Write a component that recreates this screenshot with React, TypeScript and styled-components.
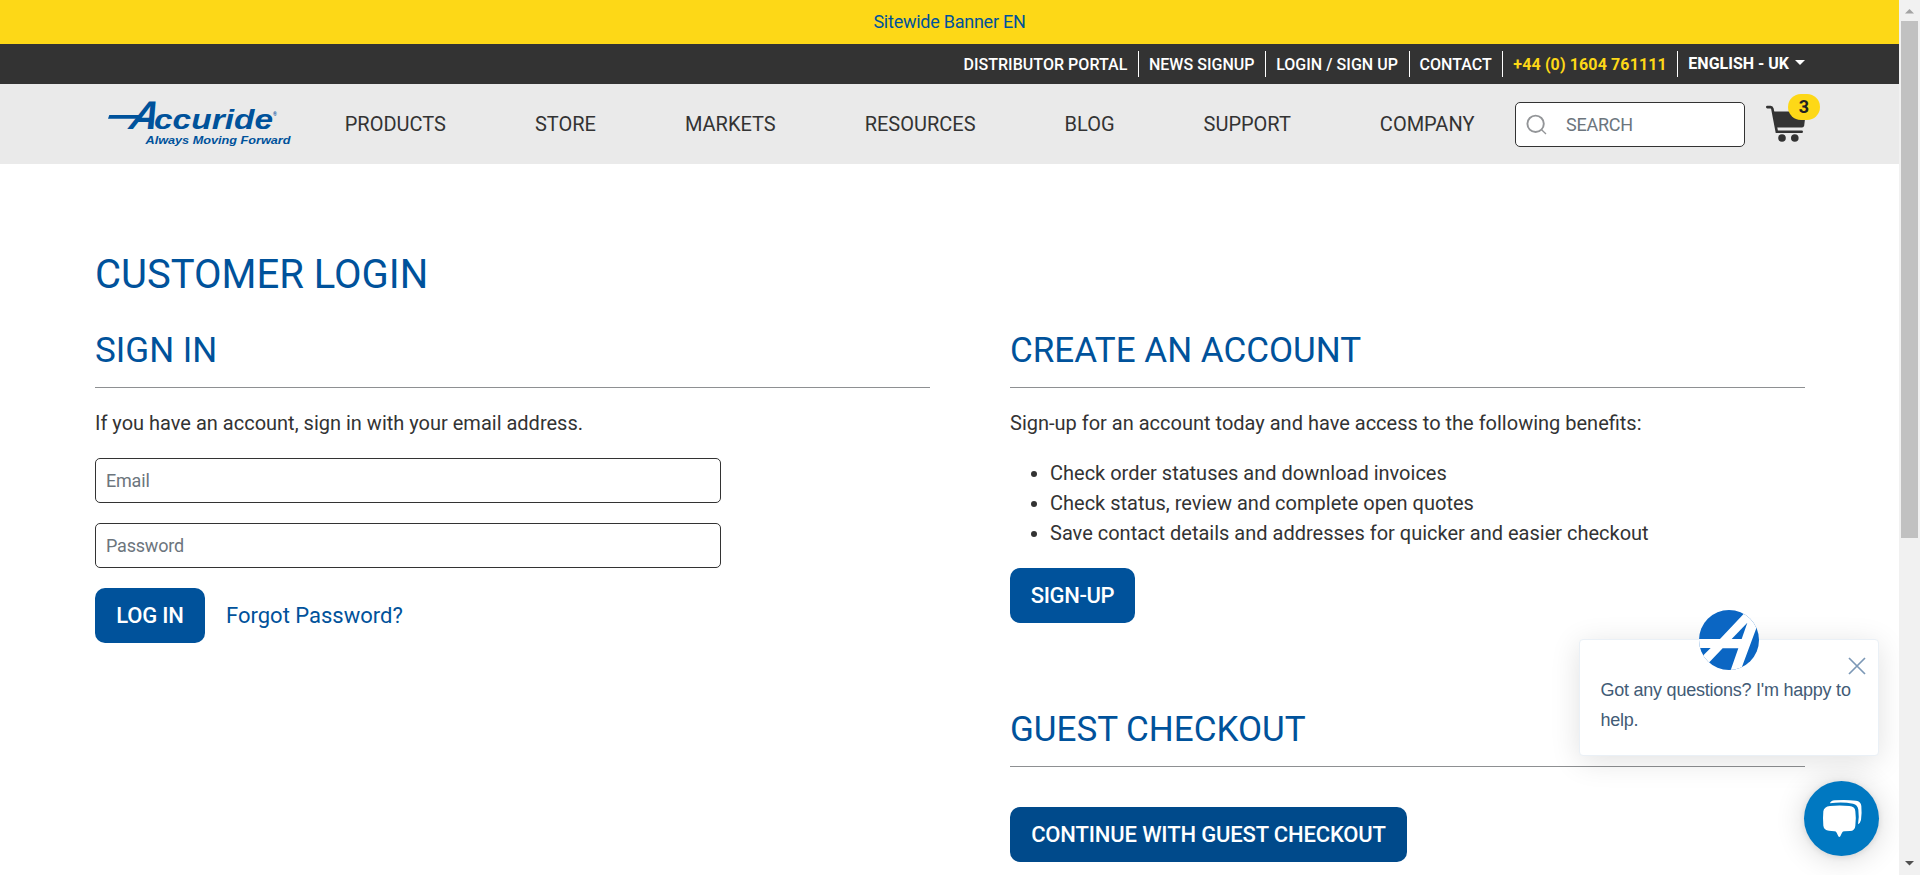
import React from "react";
import styled, { createGlobalStyle } from "styled-components";

const blue = "#00529b";
const ink = "#333333";
const yellow = "#fdd817";

const GlobalStyle = createGlobalStyle`
  *, *::before, *::after { box-sizing: border-box; }
  body {
    margin: 0;
    background: #fff;
    color: ${ink};
    font: 400 20px/30px Roboto, "Liberation Sans", sans-serif;
    overflow: hidden;
  }
  a { color: inherit; text-decoration: none; }
`;

const Screen = styled.div`
  display: flex;
  height: 875px;
  overflow: hidden;
`;

const Page = styled.div`
  position: relative;
  flex: 1;
  min-width: 0;
  height: 875px;
  overflow: hidden;
`;

const Banner = styled.div`
  height: 44px;
  background: ${yellow};
  color: ${blue};
  font-size: 18px;
  line-height: 44px;
  letter-spacing: -0.25px;
  text-align: center;
`;

const UtilityBar = styled.div`
  display: flex;
  justify-content: flex-end;
  align-items: center;
  height: 40px;
  padding-right: 94px;
  background: ${ink};
`;

const UtilityLink = styled.a<{ $accent?: boolean }>`
  height: 26px;
  padding: 0 10.5px 0 10px;
  border-right: 1px solid #fff;
  color: ${(p) => (p.$accent ? yellow : "#fff")};
  font-size: 16px;
  font-weight: ${(p) => (p.$accent ? 700 : 500)};
  letter-spacing: ${(p) => (p.$accent ? "0.12px" : "0.04px")};
  line-height: 27px;
`;

const Language = styled.a`
  display: flex;
  align-items: center;
  gap: 6px;
  padding-left: 10px;
  color: #fff;
  font-size: 16px;
  font-weight: 700;
  line-height: 24px;
  margin-bottom: 1px;
`;

const Caret = styled.span`
  border: 5px solid transparent;
  border-top-color: #fff;
  border-bottom: 0;
  margin-bottom: 3px;
`;

const Header = styled.header`
  display: flex;
  align-items: center;
  height: 80px;
  padding: 0 79px 0 100px;
  background: #eaeaea;
`;

const Logo = styled.svg`
  flex: none;
  width: 200px;
  height: 60px;
  fill: ${blue};
  font-family: "Liberation Sans", sans-serif;
  font-weight: 700;
  font-style: italic;
`;

const Nav = styled.nav`
  display: flex;
  flex: 1;
  gap: 89px;
  margin-left: 44.7px;
  white-space: nowrap;
`;

const SearchBox = styled.label`
  display: flex;
  align-items: center;
  flex: none;
  gap: 18px;
  width: 230px;
  height: 45px;
  margin-top: 1px;
  padding-left: 10px;
  border: 1px solid ${ink};
  border-radius: 5px;
  background: #fff;
`;

const SearchInput = styled.input`
  width: 160px;
  padding: 0;
  border: 0;
  outline: 0;
  background: none;
  font: 400 18px Roboto, sans-serif;
  letter-spacing: -0.25px;
  &::placeholder { color: #6c757d; opacity: 1; }
`;

const Cart = styled.div`
  position: relative;
  flex: none;
  width: 54px;
  height: 50px;
  margin-left: 21px;
`;

const CartBadge = styled.span`
  position: absolute;
  top: -5px;
  right: 0;
  width: 32px;
  height: 26px;
  border-radius: 13px;
  background: ${yellow};
  color: #212121;
  font-size: 18px;
  font-weight: 700;
  line-height: 26px;
  text-align: center;
`;

const Content = styled.main`
  padding: 87px 94px 0 95px;
`;

const Title = styled.h1`
  margin: 0 0 31px;
  color: ${blue};
  font-size: 40px;
  font-weight: 400;
  line-height: 48px;
`;

const Columns = styled.div`
  display: grid;
  grid-template-columns: 835px 795px;
  column-gap: 80px;
  align-items: start;
`;

const Section = styled.section<{ $spaced?: boolean }>`
  margin-top: ${(p) => (p.$spaced ? "86px" : "0")};
`;

const SectionTitle = styled.h2<{ $wide?: boolean }>`
  margin: 0 0 ${(p) => (p.$wide ? "40px" : "20px")};
  padding-bottom: 15px;
  border-bottom: 1px solid #8e9092;
  color: ${blue};
  font-size: 35px;
  font-weight: 400;
  line-height: 42px;
`;

const Text = styled.p`
  margin: 0 0 20px;
`;

const Field = styled.input`
  display: block;
  width: 626px;
  height: 45px;
  margin-bottom: 20px;
  padding: 0 10px;
  border: 1px solid ${ink};
  border-radius: 5px;
  outline: 0;
  font: 400 18px Roboto, sans-serif;
  letter-spacing: -0.2px;
  &::placeholder { color: #6c757d; opacity: 1; }
`;

const Actions = styled.div`
  display: flex;
  align-items: center;
  gap: 21px;
`;

const Button = styled.button<{ $width: number; $dark?: boolean; $tracking?: number }>`
  width: ${(p) => p.$width}px;
  height: 55px;
  padding: 0;
  border: 0;
  border-radius: 10px;
  background: ${(p) => (p.$dark ? "#004a8b" : blue)};
  color: #fff;
  font: 500 22px/55px Roboto, sans-serif;
  letter-spacing: ${(p) => p.$tracking ?? 0}px;
  white-space: nowrap;
`;

const ForgotLink = styled.a`
  color: ${blue};
  font-size: 22px;
`;

const Benefits = styled.ul`
  margin: 0 0 20px;
  padding-left: 40px;
`;

const ChatPrompt = styled.aside`
  position: absolute;
  top: 639px;
  right: 20px;
  width: 300px;
  height: 117px;
  padding: 35px 20px 0 20.5px;
  border: 1px solid #eaf0f6;
  border-radius: 4px;
  background: #fff;
  box-shadow: 0 5px 30px rgba(0, 0, 0, 0.12);
  color: #425b76;
  font: 400 18px/30px "Liberation Sans", sans-serif;
  letter-spacing: -0.24px;
`;

const Avatar = styled.svg`
  position: absolute;
  top: -30px;
  left: 119px;
  width: 60px;
  height: 60px;
`;

const CloseIcon = styled.svg`
  position: absolute;
  top: 17px;
  right: 12px;
  width: 18px;
  height: 18px;
  stroke: #7c98b6;
  stroke-width: 1.7;
`;

const ChatButton = styled.button`
  position: absolute;
  right: 20px;
  bottom: 19px;
  width: 75px;
  height: 75px;
  padding: 0;
  border: 0;
  border-radius: 50%;
  background: #0078c1;
  box-shadow: 0 1px 6px rgba(0, 0, 0, 0.1), 0 2px 30px rgba(0, 0, 0, 0.16);
`;

const ScrollTrack = styled.div`
  display: flex;
  flex-direction: column;
  align-items: center;
  width: 21px;
  height: 875px;
  background: #f1f1f1;
`;

const ScrollThumb = styled.div`
  width: 17px;
  height: 517px;
  margin-bottom: auto;
  background: #c1c1c1;
`;

const ScrollArrow = styled.svg<{ $muted?: boolean }>`
  width: 21px;
  height: 21px;
  fill: ${(p) => (p.$muted ? "#a3a3a3" : "#505050")};
`;

const navItems = ["PRODUCTS", "STORE", "MARKETS", "RESOURCES", "BLOG", "SUPPORT", "COMPANY"];
const utilityItems = ["DISTRIBUTOR PORTAL", "NEWS SIGNUP", "LOGIN / SIGN UP", "CONTACT"];
const benefits = [
  "Check order statuses and download invoices",
  "Check status, review and complete open quotes",
  "Save contact details and addresses for quicker and easier checkout",
];

export default function App() {
  return (
    <Screen>
      <GlobalStyle />
      <Page>
        <Banner>Sitewide Banner EN</Banner>
        <UtilityBar>
          {utilityItems.map((item) => (
            <UtilityLink key={item} href="#">{item}</UtilityLink>
          ))}
          <UtilityLink href="#" $accent>+44 (0) 1604 761111</UtilityLink>
          <Language href="#">ENGLISH - UK<Caret /></Language>
        </UtilityBar>

        <Header>
          <Logo viewBox="0 0 200 60">
            <path d="M9.3 21H42L38 24.7H8Z" />
            <text transform="translate(28 35) skewX(-14)" fontSize="40" textLength="28" lengthAdjust="spacingAndGlyphs">A</text>
            <text x="54" y="35" fontSize="28" textLength="119" lengthAdjust="spacingAndGlyphs">ccuride</text>
            <text x="173" y="22" fontSize="5">®</text>
            <text x="45.5" y="49.5" fontSize="10" textLength="145" lengthAdjust="spacingAndGlyphs">Always Moving Forward</text>
          </Logo>
          <Nav>
            {navItems.map((item) => (
              <a key={item} href="#">{item}</a>
            ))}
          </Nav>
          <SearchBox>
            <svg width="22" height="22" viewBox="0 0 22 22" fill="none" stroke="#939598">
              <circle cx="9.6" cy="9.8" r="8.2" strokeWidth="1.9" />
              <path d="M15.6 15.8L20 20" strokeWidth="1.3" />
            </svg>
            <SearchInput placeholder="SEARCH" />
          </SearchBox>
          <Cart>
            <svg width="54" height="50" viewBox="0 0 54 50" fill={ink}>
              <path d="M1.3 8.1H4.6Q6 8.1 6.4 9.8L10.8 32.8H35.7" fill="none" stroke={ink} strokeWidth="2.6" strokeLinecap="round" />
              <path d="M6.5 12.5H40L38.2 26.5Q37.9 28.5 36 28.5H10Z" />
              <circle cx="16" cy="39" r="3.8" />
              <circle cx="28.8" cy="39" r="3.8" />
            </svg>
            <CartBadge>3</CartBadge>
          </Cart>
        </Header>

        <Content>
          <Title>CUSTOMER LOGIN</Title>
          <Columns>
            <Section>
              <SectionTitle>SIGN IN</SectionTitle>
              <Text>If you have an account, sign in with your email address.</Text>
              <Field placeholder="Email" />
              <Field placeholder="Password" type="password" />
              <Actions>
                <Button $width={110} $tracking={-0.2}>LOG IN</Button>
                <ForgotLink href="#">Forgot Password?</ForgotLink>
              </Actions>
            </Section>
            <div>
              <Section>
                <SectionTitle>CREATE AN ACCOUNT</SectionTitle>
                <Text>Sign-up for an account today and have access to the following benefits:</Text>
                <Benefits>
                  {benefits.map((item) => (
                    <li key={item}>{item}</li>
                  ))}
                </Benefits>
                <Button $width={125} $tracking={-0.4}>SIGN-UP</Button>
              </Section>
              <Section $spaced>
                <SectionTitle $wide>GUEST CHECKOUT</SectionTitle>
                <Button $width={397} $dark $tracking={-0.15}>CONTINUE WITH GUEST CHECKOUT</Button>
              </Section>
            </div>
          </Columns>
        </Content>

        <ChatPrompt>
          <Avatar viewBox="417 60 180 180">
            <clipPath id="avatar-disc"><circle cx="507" cy="150" r="90" /></clipPath>
            <g clipPath="url(#avatar-disc)">
              <rect x="417" y="60" width="180" height="180" fill="#0b66c3" />
              <path d="M563 59L480 147H410V174H452L424 202L440 225L488 175H535L508 252H538L600 85Z" fill="#fff" />
              <path d="M515 147L562 98L545 147Z" fill="#0b66c3" />
            </g>
          </Avatar>
          <CloseIcon viewBox="0 0 18 18"><path d="M1 1L17 17M17 1L1 17" /></CloseIcon>
          Got any questions? I'm happy to help.
        </ChatPrompt>
        <ChatButton aria-label="Open chat">
          <svg width="75" height="75" viewBox="0 0 225 225" fill="#fff">
            <path d="M78 75Q107 72 136 75Q153 76 154 91Q157 113 154 134Q153 149 138 150L122 151Q116 151 114 155L109 166Q106 170 103 166L98 155Q96 151 91 151L75 149Q60 148 58 134Q56 112 58 91Q60 77 78 75Z" />
            <path d="M78 67Q80 59 92 58Q124 55 156 59Q171 61 172 75Q174 97 171 117Q169 126 162 130Q166 108 163 86Q161 71 147 68Q114 62 78 67Z" />
          </svg>
        </ChatButton>
      </Page>
      <ScrollTrack>
        <ScrollArrow $muted viewBox="0 0 21 21"><path d="M6 13.5L10.5 9L15 13.5Z" /></ScrollArrow>
        <ScrollThumb />
        <ScrollArrow viewBox="0 0 21 21"><path d="M6 7L10.5 11.5L15 7Z" /></ScrollArrow>
      </ScrollTrack>
    </Screen>
  );
}
